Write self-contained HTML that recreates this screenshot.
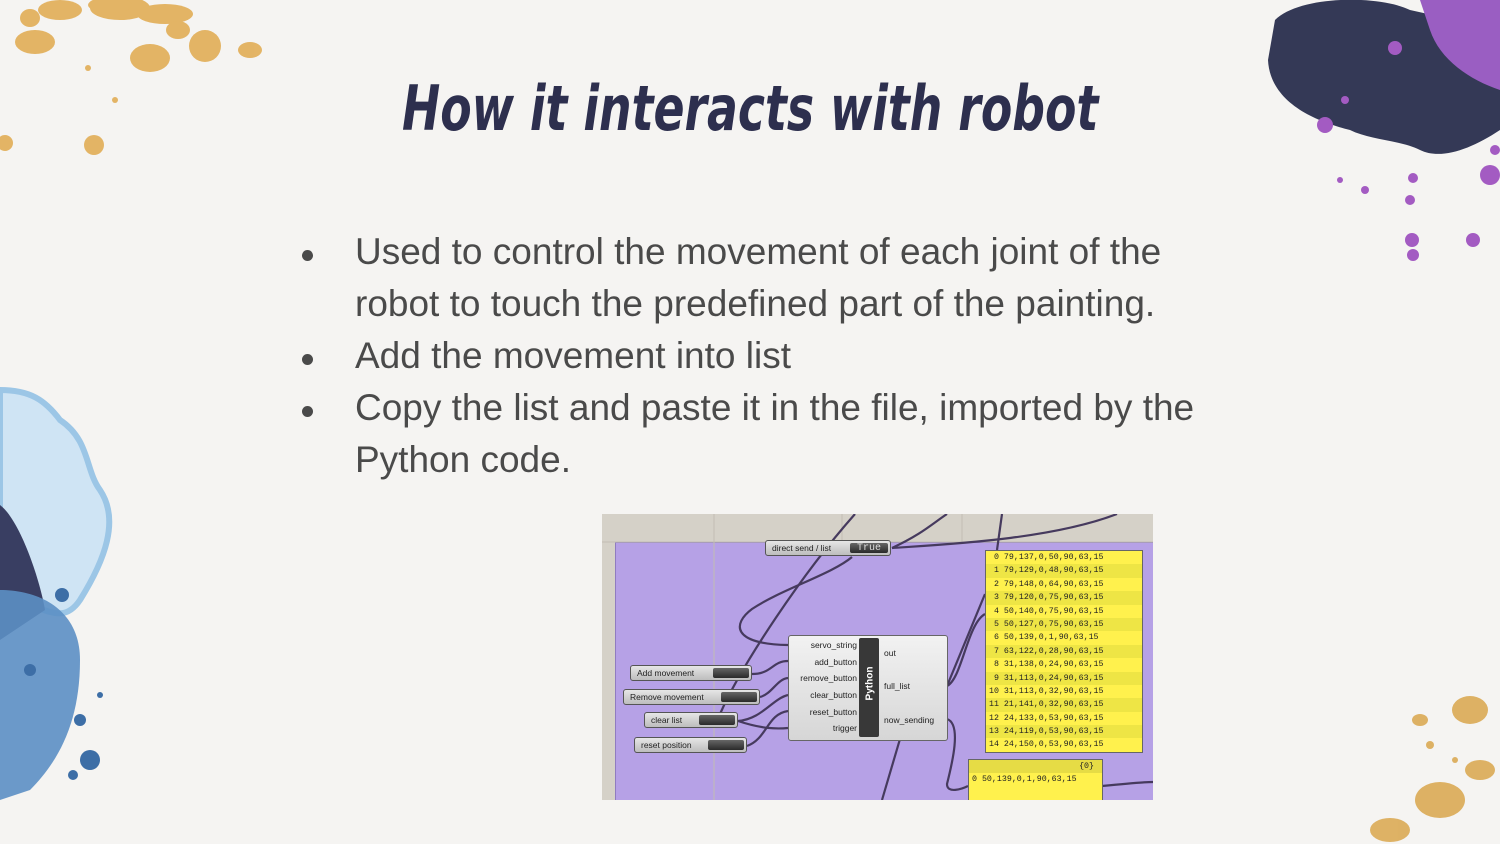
<!DOCTYPE html>
<html><head><meta charset="utf-8"><style>
body{margin:0;width:1500px;height:844px;overflow:hidden;background:#f5f4f2;position:relative;font-family:"Liberation Sans",sans-serif}
.t{position:absolute;left:0;width:1500px;top:72px;text-align:center;font-family:"DejaVu Sans Condensed","Liberation Sans",sans-serif;font-weight:bold;font-style:italic;font-size:62px;color:#2d2f4e;transform:scaleX(0.82);transform-origin:751px 0}
ul{position:absolute;left:300px;top:226px;margin:0;padding:0;list-style:none;font-size:37px;line-height:52px;color:#4a4a4a;width:925px}
li{position:relative;padding-left:55px}
li:before{content:"";position:absolute;left:2px;top:24px;width:11px;height:11px;border-radius:50%;background:#4a4a4a}
.gh{position:absolute;left:602px;top:514px;width:551px;height:286px;background:#d5d1c8;overflow:hidden;font-size:8.5px;color:#222}
.gp{position:absolute;left:13px;top:28px;width:545px;height:270px;background:#b6a1e6;border:1px solid #8f7cc0}
.ab{position:absolute}
.btn{position:absolute;height:16px;background:linear-gradient(#e6e6e6,#bdbdbd);border:1px solid #555;border-radius:3px;box-sizing:border-box;padding-left:6px;line-height:14px;font-size:8.5px}
.btn i{position:absolute;right:2px;top:2px;bottom:2px;width:36px;background:linear-gradient(#666,#2a2a2a);border-radius:2px}
.py{position:absolute;left:186px;top:121px;width:158px;height:104px;background:linear-gradient(#f2f2f2,#d6d6d6);border:1px solid #666;border-radius:3px}
.py .l{position:absolute;right:90px;text-align:right;font-size:8.5px}
.py .r{position:absolute;left:95px;font-size:8.5px}
.py .c{position:absolute;left:70px;top:2px;width:20px;height:99px;background:#383838;border-radius:2px}
.py .c span{position:absolute;left:-14px;top:40px;transform:rotate(-90deg);color:#fff;font-weight:bold;font-size:10px;width:50px;text-align:center}
.pn{position:absolute;left:383px;top:36px;width:156px;height:201px;background:#fff14d;border:1px solid #666;font-family:"Liberation Mono",monospace;font-size:8.3px}
.pn div{height:13.4px;line-height:13.4px;padding-left:3px;white-space:pre}
.pn div:nth-child(even){background:#eee545}
</style></head><body>
<svg style="position:absolute;left:0;top:0" width="1500" height="844">
<g fill="#e0a94d" opacity=".85">
<ellipse cx="60" cy="10" rx="22" ry="10"/><ellipse cx="120" cy="8" rx="30" ry="12"/><ellipse cx="35" cy="42" rx="20" ry="12"/><ellipse cx="30" cy="18" rx="10" ry="9"/><ellipse cx="110" cy="5" rx="22" ry="8"/>
<ellipse cx="165" cy="14" rx="28" ry="10"/><ellipse cx="150" cy="58" rx="20" ry="14"/><ellipse cx="205" cy="46" rx="16" ry="16"/><ellipse cx="178" cy="30" rx="12" ry="9"/><ellipse cx="250" cy="50" rx="12" ry="8"/>
<circle cx="5" cy="143" r="8"/><circle cx="94" cy="145" r="10"/><circle cx="115" cy="100" r="3"/><circle cx="88" cy="68" r="3"/></g>
<g fill="#d9a64c" opacity=".85"><ellipse cx="1470" cy="710" rx="18" ry="14"/><ellipse cx="1420" cy="720" rx="8" ry="6"/><ellipse cx="1440" cy="800" rx="25" ry="18"/><ellipse cx="1480" cy="770" rx="15" ry="10"/><ellipse cx="1390" cy="830" rx="20" ry="12"/><circle cx="1430" cy="745" r="4"/><circle cx="1455" cy="760" r="3"/></g>
<path d="M1275 20 C1300 -5 1380 -5 1410 10 L1500 30 L1500 130 C1470 150 1440 160 1420 150 C1400 140 1370 140 1350 130 C1310 120 1270 100 1268 60 Z" fill="#343956"/>
<path d="M1420 0 L1500 0 L1500 90 C1470 80 1440 60 1430 30 Z" fill="#9a5ec2"/>
<g fill="#a35bc2"><circle cx="1325" cy="125" r="8"/><circle cx="1395" cy="48" r="7"/><circle cx="1413" cy="178" r="5"/><circle cx="1490" cy="175" r="10"/><circle cx="1412" cy="240" r="7"/><circle cx="1413" cy="255" r="6"/><circle cx="1473" cy="240" r="7"/><circle cx="1410" cy="200" r="5"/><circle cx="1365" cy="190" r="4"/><circle cx="1340" cy="180" r="3"/><circle cx="1495" cy="150" r="5"/><circle cx="1345" cy="100" r="4"/></g>
<path d="M0 390 C30 390 45 400 60 420 C90 440 85 470 100 490 C120 520 105 560 80 600 C60 630 40 600 0 600 Z" fill="#cfe4f4" stroke="#9cc6e6" stroke-width="6"/>
<path d="M0 505 C20 520 40 580 45 610 L0 640 Z" fill="#393e62"/>
<path d="M0 590 C40 590 80 610 80 660 C80 720 60 760 30 790 L0 800 Z" fill="#5c8fc4" opacity=".9"/>
<g fill="#3d6ea6"><circle cx="62" cy="595" r="7"/><circle cx="80" cy="720" r="6"/><circle cx="90" cy="760" r="10"/><circle cx="73" cy="775" r="5"/><circle cx="30" cy="670" r="6"/><circle cx="100" cy="695" r="3"/></g>
</svg>
<div class="t">How it interacts with robot</div>
<ul>
<li>Used to control the movement of each joint of the robot to touch the predefined part of the painting.</li>
<li>Add the movement into list</li>
<li>Copy the list and paste it in the file, imported by the Python code.</li>
</ul>
<div class="gh">
<div class="gp"></div>
<svg class="ab" style="left:0;top:0" width="551" height="286" fill="none" stroke="#463a5e" stroke-width="2.2">
<path d="M0 28 H551 M112 0 V286 M240 0 V28 M360 0 V28"  stroke="#c2bdb3" stroke-width="1"/>
<path d="M290 34 C350 30 450 25 515 0"/><path d="M290 34 C320 20 330 10 345 0"/><path d="M400 0 L395 36"/>
<path d="M186 131 C130 130 130 110 150 95 C180 75 230 60 250 43"/><path d="M253 0 C200 60 140 150 118 200"/>
<path d="M150 160 C170 160 170 147 186 147"/><path d="M158 183 C170 180 175 165 186 164"/><path d="M136 207 C160 205 170 185 186 181"/><path d="M136 207 C160 215 175 215 186 214"/><path d="M145 232 C165 225 165 200 186 197"/>
<path d="M345 172 C360 165 365 110 383 100"/><path d="M345 205 C360 210 350 250 345 270 C345 280 360 275 366 272"/><path d="M500 272 C520 270 540 268 551 268"/>
<path d="M298 225 L280 286"/><path d="M345 172 L383 80"/>
</svg>
<div class="btn" style="left:163px;top:26px;width:126px;font-size:8.5px">direct send / list<i style="width:38px;color:#ddd;font-style:normal;font-family:'Liberation Mono',monospace;font-size:10px;text-align:center;line-height:11px">True</i></div>
<div class="btn" style="left:28px;top:151px;width:122px">Add movement<i></i></div>
<div class="btn" style="left:21px;top:175px;width:137px">Remove movement<i></i></div>
<div class="btn" style="left:42px;top:198px;width:94px">clear list<i></i></div>
<div class="btn" style="left:32px;top:223px;width:113px">reset position<i></i></div>
<div class="py"><div class="l" style="top:4px">servo_string</div><div class="l" style="top:21px">add_button</div><div class="l" style="top:37px">remove_button</div><div class="l" style="top:54px">clear_button</div><div class="l" style="top:71px">reset_button</div><div class="l" style="top:87px">trigger</div><div class="c"><span>Python</span></div><div class="r" style="top:12px">out</div><div class="r" style="top:45px">full_list</div><div class="r" style="top:79px">now_sending</div></div>
<div class="pn"><div> 0 79,137,0,50,90,63,15</div><div> 1 79,129,0,48,90,63,15</div><div> 2 79,148,0,64,90,63,15</div><div> 3 79,120,0,75,90,63,15</div><div> 4 50,140,0,75,90,63,15</div><div> 5 50,127,0,75,90,63,15</div><div> 6 50,139,0,1,90,63,15</div><div> 7 63,122,0,28,90,63,15</div><div> 8 31,138,0,24,90,63,15</div><div> 9 31,113,0,24,90,63,15</div><div>10 31,113,0,32,90,63,15</div><div>11 21,141,0,32,90,63,15</div><div>12 24,133,0,53,90,63,15</div><div>13 24,119,0,53,90,63,15</div><div>14 24,150,0,53,90,63,15</div></div>
<div class="pn" style="left:366px;top:245px;width:133px;height:45px;background:#fff14d"><div style="background:#e6dc45;text-align:right;padding-right:8px">{0}</div><div style="background:#fff14d">0 50,139,0,1,90,63,15</div></div>
</div>
</body></html>
